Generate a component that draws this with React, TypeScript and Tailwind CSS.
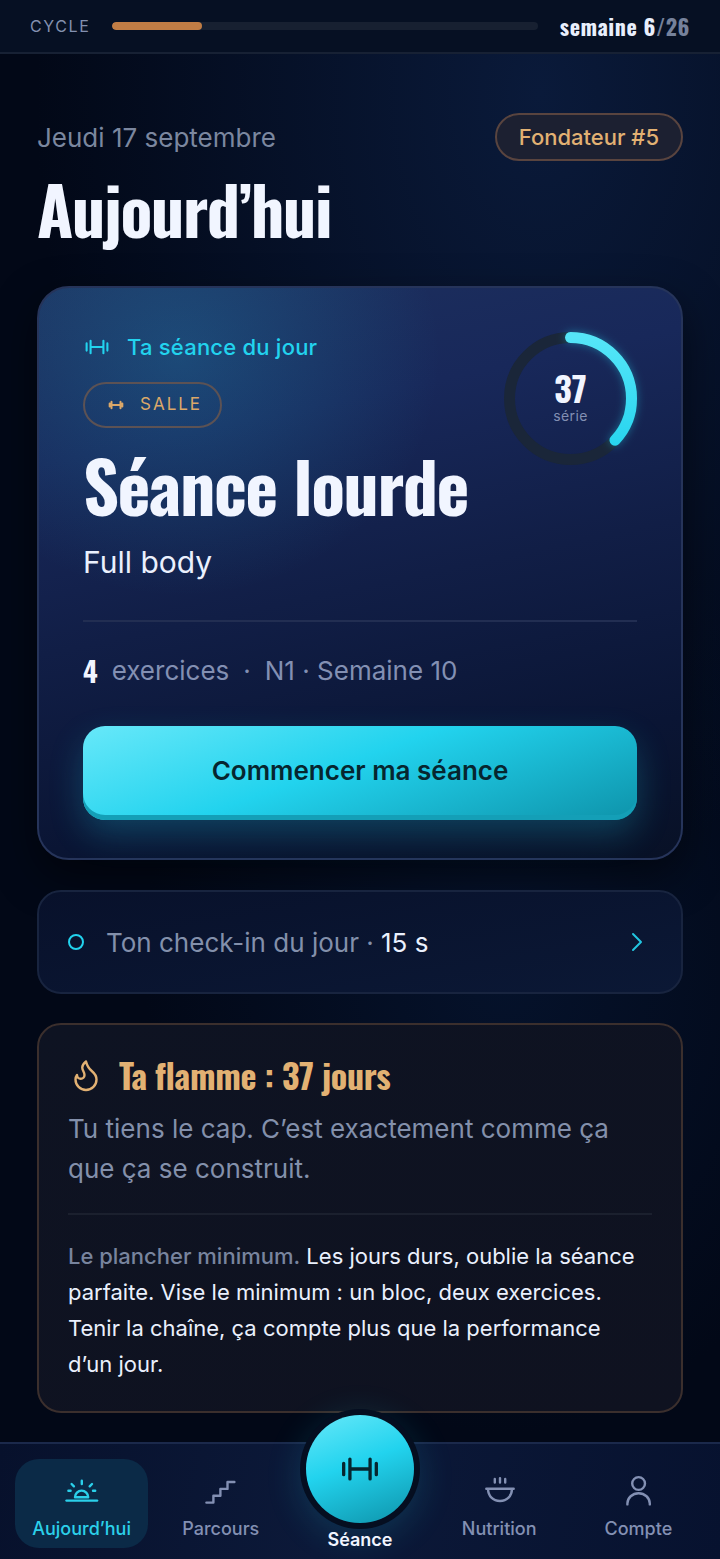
import type { ReactNode } from 'react';
import { ChevronRight, Flame } from 'lucide-react';

const CYCLE_WEEK = 6;
const CYCLE_TOTAL = 26;
const STREAK = 37;

const display = "font-['Oswald','Liberation_Sans_Narrow',sans-serif] font-bold";

function DumbbellIcon({ className }: { className?: string }) {
  return (
    <svg
      viewBox="0 0 24 24"
      fill="none"
      stroke="currentColor"
      strokeWidth="1.8"
      strokeLinecap="round"
      className={className}
      aria-hidden="true"
    >
      <path d="M6.5 6.6v10.8M17.5 6.6v10.8M3.1 8.9v6.2M20.9 8.9v6.2M6.5 12h11" />
    </svg>
  );
}

function GymIcon({ className }: { className?: string }) {
  return (
    <svg
      viewBox="0 0 24 24"
      fill="none"
      stroke="currentColor"
      strokeWidth="2.4"
      strokeLinecap="round"
      className={className}
      aria-hidden="true"
    >
      <path d="M6.6 8v8M17.4 8v8M4.4 10.2v3.6M19.6 10.2v3.6M6.6 12h10.8" />
    </svg>
  );
}

function NavIcon({ children }: { children: ReactNode }) {
  return (
    <svg
      viewBox="0 0 40 40"
      fill="none"
      stroke="currentColor"
      strokeWidth="2.4"
      strokeLinecap="round"
      strokeLinejoin="round"
      className="size-10"
      aria-hidden="true"
    >
      {children}
    </svg>
  );
}

const navItems = [
  {
    label: 'Aujourd’hui',
    href: '#aujourdhui',
    active: true,
    icon: (
      <>
        <path d="M4.5 29.6h30.6" />
        <path d="M13 26.2a6.6 6.6 0 0 1 13.2 0z" />
        <path d="M19.8 9.8v3.2M9.6 13l2.3 2.3M30 13l-2.3 2.3M6.4 19.8h2.2M31 19.8h2.2" />
      </>
    ),
  },
  {
    label: 'Parcours',
    href: '#parcours',
    icon: <path d="M5.4 31.6h7v-6.9h7v-6.8h7.1V11h6.9" />,
  },
  { label: 'Séance', href: '#seance', main: true },
  {
    label: 'Nutrition',
    href: '#nutrition',
    icon: (
      <>
        <path d="M7.3 17.7h27.4M9 18c.2 7.2 5 12 12 12s11.8-4.8 12-12" />
        <path d="M15.8 7.9v3.6M21 7.1v4.4M26.2 7.9v3.6" />
      </>
    ),
  },
  {
    label: 'Compte',
    href: '#compte',
    icon: (
      <>
        <circle cx="20.6" cy="12.5" r="6.4" />
        <path d="M9.4 33.4v-.8a11.2 10.4 0 0 1 22.4 0v.8" />
      </>
    ),
  },
];

function StreakRing({ value }: { value: number }) {
  return (
    <div className="relative size-[133px] shrink-0">
      <svg viewBox="0 0 133 133" fill="none" className="size-full overflow-visible" aria-hidden="true">
        <defs>
          <linearGradient id="ring" x1="0" y1="0" x2="1" y2="0">
            <stop offset="0" stopColor="#22d3ee" />
            <stop offset="1" stopColor="#55e5f8" />
          </linearGradient>
        </defs>
        <circle cx="66.5" cy="66.5" r="61" stroke="#1a2639" strokeWidth="11" />
        <circle
          cx="66.5"
          cy="66.5"
          r="61"
          stroke="url(#ring)"
          strokeWidth="11"
          strokeLinecap="round"
          pathLength="100"
          strokeDasharray={`${value} 100`}
          transform="rotate(-90 66.5 66.5)"
          className="drop-shadow-[0_0_4px_rgba(34,211,238,0.4)]"
        />
      </svg>
      <div className="absolute inset-0 flex flex-col items-center justify-center gap-0.5 pb-1">
        <span className={`${display} text-[34px] leading-9 text-[#f1f5ff]`}>{value}</span>
        <span className="text-sm leading-4 tracking-wide text-[#8390b3]">série</span>
      </div>
    </div>
  );
}

function CycleBar() {
  return (
    <header className="flex h-[54px] items-center gap-[22px] border-b-2 border-[#172134] bg-[#061023] px-[30px]">
      <span className="text-base tracking-widest text-[#8390b0]">CYCLE</span>
      <div className="h-2 flex-1 overflow-hidden rounded-full bg-[#172031]">
        <div
          className="h-full rounded-full bg-[#c17d45]"
          style={{ width: `${((CYCLE_WEEK - 0.5) / CYCLE_TOTAL) * 100}%` }}
        />
      </div>
      <span className={`${display} text-[22px] leading-8 tracking-wide text-[#e9effc]`}>
        semaine {CYCLE_WEEK}
        <span className="text-[#76829b]">/{CYCLE_TOTAL}</span>
      </span>
    </header>
  );
}

function SessionCard() {
  return (
    <section className="mt-[38px] rounded-[32px] border-2 border-[#26345a] bg-[radial-gradient(ellipse_260px_240px_at_22%_12%,rgba(34,170,210,0.24),transparent),linear-gradient(168deg,#1d305e_0%,#18285a_25%,#111e46_52%,#0a1534_80%,#081126_100%)] px-11 pt-11 pb-[38px] shadow-[0_16px_40px_rgba(0,0,0,0.5)]">
      <div className="flex items-start justify-between">
        <div>
          <div className="flex h-[30px] items-center gap-4 text-[#22d3ee]">
            <DumbbellIcon className="size-7" />
            <span className="text-[22px] font-medium tracking-[0.01em]">Ta séance du jour</span>
          </div>
          <div className="mt-5 inline-flex h-[46px] items-center gap-3.5 rounded-full border-2 border-[#5c5254] pr-[18px] pl-[21px] text-[#dba869]">
            <GymIcon className="size-5" />
            <span className="text-[17px] tracking-[2px]">SALLE</span>
          </div>
          <h2 className={`${display} mt-4 text-[70px] leading-20 tracking-[-0.02em] text-[#f1f5ff]`}>
            Séance lourde
          </h2>
          <p className="mt-[18px] text-3xl leading-10 text-[#eaf0fd]">Full body</p>
        </div>
        <StreakRing value={STREAK} />
      </div>

      <div className="mt-[38px] flex items-center border-t-2 border-[#222e52] pt-[29px] text-[26px] leading-10 text-[#8390b3]">
        <span className={`${display} mr-3.5 text-[28px] text-[#f1f5ff]`}>4</span>
        <span>exercices</span>
        <span className="mx-3.5">·</span>
        <span>N1 · Semaine 10</span>
      </div>

      <button
        type="button"
        className="mt-[35px] h-[94px] w-full rounded-[22px] bg-[linear-gradient(160deg,#67e8f9_0%,#22d3ee_45%,#0e93aa_100%)] pb-[5px] text-[26px] font-semibold text-[#06262f] shadow-[inset_0_-5px_0_#149fb7,0_14px_34px_rgba(34,211,238,0.24)]"
      >
        Commencer ma séance
      </button>
    </section>
  );
}

function FlameCard() {
  return (
    <section className="mt-[29px] rounded-3xl border-2 border-[#3b2f2d] bg-[linear-gradient(160deg,#0e1322,#0f1220)] px-[29px] pt-[26px] pb-[29px]">
      <h2
        className={`${display} flex items-center gap-[15px] text-[34px] leading-12 tracking-[-0.01em] text-[#e2b173]`}
      >
        <Flame className="size-9" strokeWidth={1.6} aria-hidden="true" />
        Ta flamme : {STREAK} jours
      </h2>
      <p className="mt-2.5 text-[26px] leading-10 text-[#8390ab]">
        Tu tiens le cap. C’est exactement comme ça que ça se construit.
      </p>
      <hr className="mt-6 border-t-2 border-[#1b202e]" />
      <p className="mt-[23px] pr-2 text-[22px] leading-9 text-[#eaf0fd]">
        <span className="font-medium text-[#78849e]">Le plancher minimum.</span> Les jours durs, oublie la séance
        parfaite. Vise le minimum : un bloc, deux exercices. Tenir la chaîne, ça compte plus que la performance d’un
        jour.
      </p>
    </section>
  );
}

function BottomNav() {
  return (
    <nav className="sticky bottom-0 z-10 border-t-2 border-[#1b294b] bg-[linear-gradient(100deg,#07112c,#0c1939_45%,#07122f)] px-[15px] pt-[15px] pb-[7px]">
      <div className="grid grid-cols-5 items-start gap-1.5">
        {navItems.map((item) =>
          item.main ? (
            <a key={item.href} href={item.href} className="-mt-11 flex flex-col items-center gap-[5px]">
              <span className="flex size-[108px] items-center justify-center rounded-full bg-[linear-gradient(160deg,#67e8f9_0%,#22d3ee_45%,#0e93aa_100%)] text-[#06262f] shadow-[0_0_0_6px_#050e20,0_8px_36px_6px_rgba(34,211,238,0.16)]">
                <DumbbellIcon className="size-11" />
              </span>
              <span className="text-lg leading-6 font-semibold text-[#f1f5ff]">{item.label}</span>
            </a>
          ) : (
            <a
              key={item.href}
              href={item.href}
              aria-current={item.active ? 'page' : undefined}
              className={`flex flex-col items-center gap-1.5 rounded-3xl pt-3 pb-[7px] ${
                item.active ? 'bg-[#0b2a47] text-[#2bd0ea]' : 'text-[#8390b3]'
              }`}
            >
              <NavIcon>{item.icon}</NavIcon>
              <span className="text-lg leading-6 font-medium">{item.label}</span>
            </a>
          ),
        )}
      </div>
    </nav>
  );
}

export default function App() {
  return (
    <div className="flex min-h-screen flex-col bg-[#020817] bg-[radial-gradient(ellipse_70%_50%_at_75%_6%,#0a1a3a,transparent),radial-gradient(ellipse_50%_30%_at_70%_62%,#05122b,transparent)] font-['Inter',sans-serif] text-[#eaf0fd]">
      <CycleBar />
      <main className="flex-1 px-[37px] pt-[59px] pb-7">
        <div className="flex items-center justify-between">
          <p className="text-[26px] text-[#7b879f]">Jeudi 17 septembre</p>
          <span className="flex h-12 items-center rounded-full border-2 border-[#59443f] bg-[#1c2031] px-[22px] text-[22px] font-medium text-[#e2b173]">
            Fondateur #5
          </span>
        </div>
        <h1 className={`${display} mt-[7px] text-[66px] leading-20 tracking-[-0.02em] text-[#f1f5ff]`}>
          Aujourd’hui
        </h1>

        <SessionCard />

        <a
          href="#check-in"
          className="mt-[30px] flex h-[104px] items-center rounded-3xl border-2 border-[#18243f] bg-[linear-gradient(170deg,#08112b,#0b1835)] px-7 text-[26px] text-[#8390ab]"
        >
          <span className="mr-[22px] ml-px size-4 rounded-full border-2 border-[#22d3ee]" />
          <span>
            Ton check-in du jour · <span className="text-[#eaf0fd]">15 s</span>
          </span>
          <ChevronRight className="ml-auto size-8 text-[#22c5e0]" strokeWidth={1.5} aria-hidden="true" />
        </a>

        <FlameCard />
      </main>
      <BottomNav />
    </div>
  );
}
